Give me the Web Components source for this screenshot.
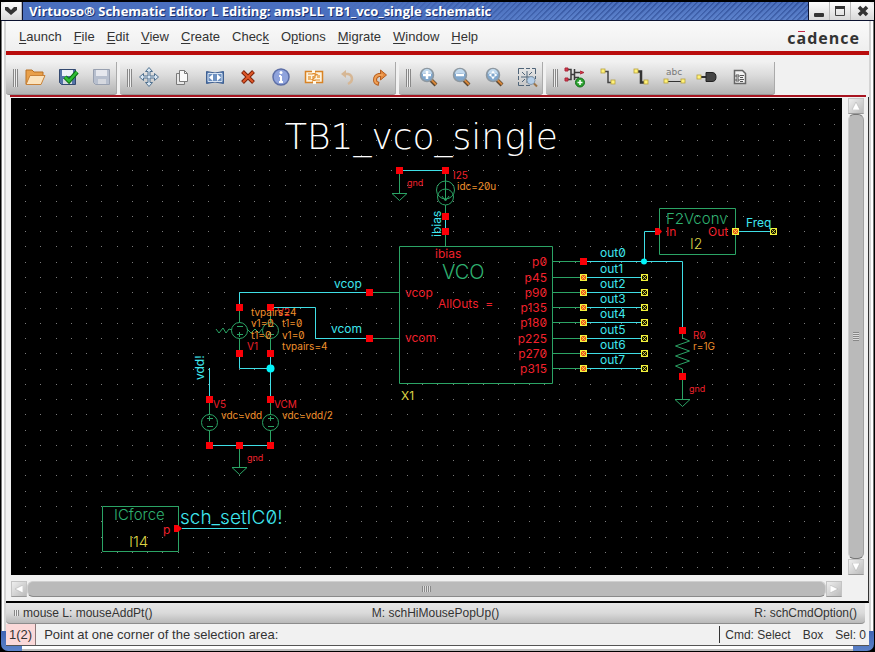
<!DOCTYPE html>
<html lang="en">
<head>
<meta charset="utf-8">
<title>Virtuoso Schematic Editor</title>
<style>
html, body { margin: 0; height: 100%; background: #000; }
body { font-family: "Liberation Sans", Arial, sans-serif; font-size: 13px; color: #333; }
</style>
</head>
<body>
<app-window></app-window>
<script>
function define(name, html, setup) {
  const tpl = document.createElement('template');
  tpl.innerHTML = html;
  customElements.define(name, class extends HTMLElement {
    constructor() {
      super();
      this.attachShadow({ mode: 'open' }).append(tpl.content.cloneNode(true));
    }
    connectedCallback() { if (setup) setup(this, this.shadowRoot); }
  });
}

const RESET = 'button{font:inherit;color:inherit;background:none;border:0;margin:0;padding:0;}';

/* ---------- title bar ---------- */
define('title-bar', `<style>${RESET}
:host { display:flex; height:20px; border-bottom:1px solid #0c1230; border-top:1px solid #000; box-sizing:border-box; background:#e8e8e8; }
h1 { flex:1; margin:0; padding-left:6px; font:bold 13px/18px "Open Sans","Noto Sans",sans-serif; color:#fff; white-space:nowrap; overflow:hidden;
  border-left:1px solid #0c1230; border-right:1px solid #0c1230; text-shadow:1px 1px 0 #1b2f6b;
  background:linear-gradient(90deg,#4a6fbe 0,#4a6fbe 40%,transparent 70%), linear-gradient(#3a5cab55,#6f94d855), repeating-linear-gradient(135deg,#2f4f9a 0 1px,#5379c6 2px 4px); }
button { width:21px; display:flex; align-items:center; justify-content:center; background:linear-gradient(#fdfdfd,#d8d8d8); border-right:1px solid #bbb; }
button:last-child { width:23px; border-right:0; border-top-right-radius:6px; }
button.menu { border-top-left-radius:6px; }
svg { display:block; }
</style>
<button class="menu" aria-label="Window menu"><svg width="12" height="10"><path d="M0 1h3l3 3 3-3h3v3L6 9 0 4z" fill="#333"/></svg></button>
<h1><slot></slot></h1>
<button aria-label="Minimize"><svg width="12" height="12"><rect x="1" y="8" width="10" height="4" rx="1" fill="#333"/></svg></button>
<button aria-label="Maximize"><svg width="12" height="12"><path d="M1.500 1.500h9v9h-9z" fill="none" stroke="#444" stroke-width="1"/><path d="M1 1h10v3H1z" fill="#333"/></svg></button>
<button aria-label="Close"><svg width="12" height="12"><path d="M2 2l8 8M10 2l-8 8" stroke="#333" stroke-width="3.500"/></svg></button>`);

/* ---------- menu bar ---------- */
define('menu-bar', `<style>${RESET}
:host { display:flex; align-items:center; justify-content:space-between; height:30px; padding:0 10px 0 7px; border-bottom:4px solid #b90c0c; background:linear-gradient(#fafafa,#efefef); }
nav { display:flex; padding-top:2px; }
button { padding:0 6px; line-height:20px; }
u { text-underline-offset:2px; text-decoration-thickness:1px; }
.brand { font:bold 16px/20px "Open Sans","Noto Sans",sans-serif; color:#333; display:flex; gap:1px; padding-top:4px; }
.brand i { font-style:normal; position:relative; }
.brand i::before { content:""; position:absolute; left:1px; right:1px; top:3px; height:1px; background:#c4274a; }
</style>
<nav></nav><div class="brand" aria-label="cadence"></div>`, (host, root) => {
  root.querySelector('nav').innerHTML = ['_Launch','_File','_Edit','_View','_Create','Chec_k','O_ptions','_Migrate','_Window','_Help']
    .map(t => '<button>' + t.replace(/_(.)/, '<u>$1</u>') + '</button>').join('');
  root.querySelector('.brand').innerHTML = [...'cadence'].map((c, i) => i === 1 ? `<i>${c}</i>` : `<span>${c}</span>`).join('');
});

/* ---------- tool bar ---------- */
define('tool-button', `<style>${RESET}
:host { display:block; width:33px; }
button { width:100%; height:29px; padding-bottom:2px; display:flex; align-items:center; justify-content:center; }
</style><button><slot></slot></button>`, (host, root) => {
  root.querySelector('button').setAttribute('aria-label', host.getAttribute('label'));
});

define('tool-group', `<style>
:host { display:flex; align-items:center; height:33px; padding-left:7px; box-sizing:border-box; border-bottom:1px solid #999; border-radius:0 0 3px 3px;
  background:linear-gradient(#f0f0f0,#dcdcdc 40%,#b4b4b4); box-shadow:inset -1px 0 0 #aaa; }
.grip { width:5px; height:18px; background:repeating-linear-gradient(90deg,#888 0 1px,#eee 1px 2px); }
</style><span class="grip"></span><slot></slot>`);

const svg = body => `<svg width="24" height="24" viewBox="0 0 24 24" fill="none">${body}</svg>`;
const magnifier = inner => svg(`<path d="M15 15l5 5" stroke="#5b4630" stroke-width="4"/><path d="M15.500 15l4.500 4.500" stroke="#d8873a" stroke-width="2"/><circle cx="11" cy="10" r="6.500" fill="#7fa6cc" stroke="#8e98a0" stroke-width="1.500"/><path d="M6 9a5 5 0 0 1 10 0q-5-2-10 0z" fill="#c3daee"/>${inner}`);
const pin = (x, y) => `<rect x="${x}" y="${y}" width="4" height="4" fill="#fff27a" stroke="#b8a23c" stroke-width=".8"/>`;
const TOOLS = [
  [
    ['Open', svg('<path d="M3 19V5h6l2 2h9v4" fill="#e9a04a" stroke="#b87025"/><path d="M3 19.500l4-9h15l-4 9z" fill="#fbe3bd" stroke="#c98238"/>')],
    ['Check and save', svg('<path d="M3.500 4.500h16v15h-14l-2-2z" fill="#5574a8" stroke="#33496f"/><path d="M6 5h11v6H6z" fill="#eef2f8"/><path d="M7 14h9v5H7z" fill="#d5dae2"/><path d="M9 12l4 4 8-9" stroke="#0c6d12" stroke-width="4.500"/><path d="M9 12l4 4 8-9" stroke="#2fbf35" stroke-width="2.500"/>')],
    ['Save', svg('<path d="M4.500 4.500h16v15h-14l-2-2z" fill="#b7bfce" stroke="#98a0b0"/><path d="M7 5h11v6H7z" fill="#e6e8ee"/><path d="M9 14h8v5H9z" fill="#d5d8df"/>')]
  ],
  [
    ['Move', svg('<path d="M12 2.500l3.500 4H13v4.500h4.500V8.500l4 3.500-4 3.500V13H13v4.500h2.500l-3.500 4-3.500-4H11V13H6.500v2.500l-4-3.500 4-3.500V11H11V6.500H8.500z" fill="#dbe8f4" stroke="#50718f"/>')],
    ['Copy', svg('<path d="M6.500 8.500h8v11h-8z" fill="#e8e8e8" stroke="#7a7a7a"/><path d="M9.500 5.500h5l3 3v8h-8z" fill="#fafafa" stroke="#7a7a7a"/><path d="M14.500 5.500v3h3" stroke="#7a7a7a"/>')],
    ['Stretch', svg('<path d="M3.500 6.500q8.500 3 17 0v12q-8.500-3-17 0z" fill="#4f76ad" stroke="#3e5f91"/><path d="M5 8.500h14v8H5z" stroke="#d7e3f2" fill="#6d90c0"/><path d="M6 12.500l4-3.500v7zM18 12.500l-4-3.500v7z" fill="#fff"/>')],
    ['Delete', svg('<path d="M6.500 6.500l11 11M17.500 6.500l-11 11" stroke="#7d2109" stroke-width="4"/><path d="M7 7l10 10M17 7l-10 10" stroke="#e0592a" stroke-width="2"/>')],
    ['Properties', svg('<circle cx="12" cy="12" r="8" fill="#8fa3dc" stroke="#5c6ea6" stroke-width="1.500"/><path d="M12 11v6M10 17h4M10 11h2" stroke="#fff" stroke-width="2"/><circle cx="12" cy="7.500" r="1.500" fill="#fff"/>')],
    ['Rotate', svg('<path d="M3.500 6.500h17v11h-17z" fill="#fdf3df" stroke="#d98324" stroke-width="1.500"/><path d="M6 9h5v-1l4 1.500-4 2v6M18 15h-5v1l-3-1.500 3-2V7" stroke="#e08d30" stroke-width="1.200"/><path d="M10 5h3v3h-3zM11 16h3v3h-3z" fill="#fff8ea"/><path d="M6 11h3v4H6zM15 10h3v3h-3z" fill="#edb36a"/>')],
    ['Undo', svg('<path d="M9 9h4q4 1 4 5 0 3-4 5" stroke="#d6b795" stroke-width="2.500"/><path d="M6 9l5-4v8z" fill="#d6b795"/>')],
    ['Redo', svg('<path d="M15 10h-4q-4 1-4 5 0 3 4 4" stroke="#b55e20" stroke-width="4"/><path d="M18.500 10l-6-5v10z" fill="#e58a3f" stroke="#b55e20"/><path d="M15 10h-4q-4 1-4 5 0 3 3 3.500" stroke="#f0a055" stroke-width="2"/>')]
  ],
  [
    ['Zoom in', magnifier('<path d="M11 6v8M7 10h8" stroke="#fff" stroke-width="2.500"/>')],
    ['Zoom out', magnifier('<path d="M7 10h8" stroke="#fff" stroke-width="2.500"/>')],
    ['Zoom fit', magnifier('<path d="M6.500 10l3-2v4zM15.500 10l-3-2v4zM11 5.500l-2 3h4zM11 14.500l-2-3h4z" fill="#fff"/>')],
    ['Zoom selected', svg('<path d="M3.500 9V3.500H9M11 3.500h4M17 3.500h3.500V9M20.500 11v3M3.500 11v4M3.500 17v3.500H9M11 20.500h4" stroke="#4f6478"/><path d="M12 6v12M6 12h12M7 7l3 3M17 7l-3 3M7 17l3-3" stroke="#4f6478"/><circle cx="16" cy="15.500" r="4" fill="#b4cee8" stroke="#8396a8"/><path d="M19 18.500l3 3" stroke="#9c7448" stroke-width="2"/>')]
  ],
  [
    ['Create instance', svg('<path d="M2 4.500h6v10H2M11.500 4v11M8 9.500h3M12 7.500h5M12 12.500h4" stroke="#3a3a3a" stroke-width="1.500"/><path d="M2 3h3v3H2zM2 13h3v3H2zM17 6l4 1.500-4 1.500" fill="#d8384a" stroke="#a8283a"/><circle cx="17" cy="17.500" r="4.500" fill="#2aa02e" stroke="#14701a"/><path d="M17 15v5M14.500 17.500h5" stroke="#fff" stroke-width="1.500"/>')],
    ['Create wire', svg(`<path d="M7 6.500h5v11h5" stroke="#444" stroke-width="1.500"/>${pin(5, 4)}${pin(15, 15)}`)],
    ['Create wide wire', svg(`<path d="M7 6.500h5v11h5" stroke="#333" stroke-width="2.500"/>${pin(5, 4)}${pin(15, 15)}`)],
    ['Wire name', svg(`<text x="4" y="10" font-family="DejaVu Sans" font-size="9" fill="#777">abc</text><path d="M4 16.500h16" stroke="#333"/>${pin(2, 14)}${pin(19, 14)}`)],
    ['Create pin', svg(`<path d="M4 12h8" stroke="#333" stroke-width="2"/><path d="M11 7.500h6q4 0 4 4.500t-4 4.500h-6z" fill="#444" stroke="#222"/>${pin(2, 10)}`)],
    ['Note', svg('<path d="M6.500 5.500h8l3 3v10h-11z" fill="#f2f2f2" stroke="#666" stroke-width="1.500"/><path d="M8 10h3v2H8zM12 10.500h4M12 12.500h3M8 14h3v2H8zM12 14.500h4M12 16.500h3" stroke="#555"/>')]
  ]
];
define('tool-bar', `<style>
:host { display:flex; gap:3px; padding-top:7px; }
tool-group:last-child { padding-right:19px; }
</style>`, (host, root) => {
  for (const group of TOOLS) {
    const g = document.createElement('tool-group');
    g.innerHTML = group.map(([label, icon]) => `<tool-button label="${label}">${icon}</tool-button>`).join('');
    root.append(g);
  }
});

/* ---------- scroll bars ---------- */
define('scroll-strip', `<style>${RESET}
:host { display:flex; height:16px; }
:host([vertical]) { flex-direction:column; height:auto; width:16px; }
button { width:16px; height:16px; flex:none; display:flex; align-items:center; justify-content:center; background:linear-gradient(135deg,#eee,#bbb); border:1px solid #c4c4c4; border-bottom-color:#999; box-sizing:border-box; }
.thumb { flex:1; display:flex; align-items:center; justify-content:center; box-sizing:border-box; background:#bababa; border:1px solid #cfcfcf; border-bottom-color:#8a8a8a; border-radius:6px; }
:host([vertical]) .thumb { border-color:#777 #a0a0a0 #777 #cfcfcf; }
.grip { width:9px; height:6px; background:repeating-linear-gradient(90deg,#888 0 1px,#ddd 1px 2px); }
:host([vertical]) .grip { width:6px; height:9px; background:repeating-linear-gradient(#888 0 1px,#ddd 1px 2px); }
:host([vertical]) svg { transform:rotate(90deg); }
</style>
<button aria-label="Back"><svg width="8" height="8"><path d="M0 4l8-4v8z" fill="#fff" stroke="#aaa" stroke-width=".5"/></svg></button>
<div class="thumb"><span class="grip"></span></div>
<button aria-label="Forward"><svg width="8" height="8"><path d="M8 4L0 0v8z" fill="#fff" stroke="#aaa" stroke-width=".5"/></svg></button>`);

/* ---------- schematic ---------- */
define('schematic-canvas', `<style>
:host { display:block; background:#000; overflow:hidden; min-width:0; min-height:0; }
svg { display:block; width:100%; height:100%; }
text { font-family:Inter,"DejaVu Sans",sans-serif; font-feature-settings:"zero" 1; font-weight:400; white-space:pre; }
text.light { font-weight:300; }
text.title { font-family:"DejaVu Sans",sans-serif; font-weight:200; }
.w { stroke:#3fdfe6; } .g { stroke:#2ba465; } .w,.g { fill:none; stroke-width:1; }
</style><svg role="img" aria-label="TB1_vco_single schematic"><g transform="translate(-11,-98)"></g></svg>`, (host, root) => {
  const step = 15.27;
  let dots = '';
  for (let j = 0; j < 31; j++) for (let i = 0; i < 54; i++)
    dots += `M${Math.round(25 + i * step)} ${Math.round(109 + j * step)}h1v1h-1z`;
  let s = `<path d="${dots}" fill="#7c7c7c"/>`;
  const wire = d => s += `<path class="w" d="${d}"/>`;
  const green = d => s += `<path class="g" d="${d}"/>`;
  const sq = (x, y) => s += `<rect x="${x - 3}" y="${y - 3}" width="7" height="7" fill="#fb0007"/>`;
  const noconn = (x, y, fill) => s += `<rect x="${x - 3}.500" y="${y - 2}.500" width="6" height="6" fill="${fill}" stroke="#f2f23c"/><path d="M${x - 2} ${y - 1}l5 5m0-5l-5 5" stroke="#f2f23c" stroke-width=".8"/>`;
  const circle = (x, y, r) => s += `<circle class="g" cx="${x}" cy="${y}" r="${r}"/>`;
  const text = (t, x, y, size, fill, extra = '') => s += `<text x="${x}" y="${y}" font-size="${size}" fill="${fill}" ${extra}>${t}</text>`;
  const RED = '#f0202c', ORANGE = '#f0902c', CYAN = '#3fe6ee', GREEN = '#2fb070', YELLOW = '#dcd444';

  /* boxes */
  green('M399.500 246.500h153v137h-153zM659.500 208.500h76v46h-76zM102.500 506.500h76v45h-76z');

  /* bias branch */
  wire('M399 170.500h46M445.500 216v15');
  green('M399.500 170v23M392 193.500h15l-7.500 7zM445.500 170v30M445.500 205v11M445.500 231v15M442 196l3.500 5 3.500-5');
  circle(445.5, 190, 9); circle(445.5, 197, 8);
  [[399, 170], [445, 170], [445, 216], [445, 231]].forEach(p => sq(...p));

  /* control inputs */
  wire('M239.500 307v-14.500H369M270 307.500h45.500v31H369M239.500 353v15.500h31M270.500 353v46M209.500 368v31M209 445.500h61');
  green('M369 292.500h30M369 338.500h30M239.500 307v46M270.500 307v46M209.500 399v46M270.500 399v46M239.500 445v22M232 467.500h15l-7.500 7z');
  [[239, 330], [270, 330], [209, 422], [270, 422]].forEach(([x, y], i) => {
    s += `<circle cx="${x}.500" cy="${y}.500" r="8" class="g" style="fill:#000"/>`;
    const a = y - 4, b = y + 4;
    green(`M${x - 2} ${a}.500h6M${x - 2} ${b}.500h6M${x}.500 ${(i < 2 ? b : a) - 2}v5`);
  });
  green('M216 329l3 4 4-5 3 5 3-4 3 1M247 329l4 4 4-4 4 4 3-4');
  [[369, 292], [369, 338], [239, 307], [270, 307], [239, 353], [270, 353], [209, 399], [270, 399], [209, 445], [239, 445], [270, 445]].forEach(p => sq(...p));
  s += '<circle cx="270.500" cy="368.500" r="4" fill="#00f4fa"/>';

  /* outputs */
  [261, 277, 292, 307, 322, 338, 353, 368].forEach((y, i) => {
    green(`M552 ${y}.500h31`);
    wire(`M583 ${y}.500h61`);
    if (i) { noconn(583, y - 1, '#e8531c'); noconn(644, y - 1, '#161600'); } else sq(583, y);
    text('out' + i, 600, y - 4, 12, CYAN);
    text('p' + i * 45, 547, y + 5, 12, RED, 'text-anchor="end"');
  });
  wire('M644.500 261v-29.500H658M644 261.500h38.500V330M736 231.500h37');
  s += '<circle cx="644" cy="261.500" r="3" fill="#00f4fa"/><path d="M655 228h4l3 3.500-3 3.500h-4z" fill="#fb0007"/>';
  noconn(735, 230, '#e8531c'); noconn(773, 230, '#161600');
  green('M682.500 334v4l7 3-14 5 14 5-14 5 14 5-14 5 7 3v4M682.500 376v23M675 399.500h15l-7.500 7z');
  sq(682, 330); sq(682, 376);

  /* initial condition */
  wire('M182 528.500h66');
  s += '<path d="M174 525h4l4 3.500-4 3.500h-4z" fill="#fb0007"/>';

  /* labels */
  text('TB1_vco_single', 285, 149, 36, '#fff', 'class="title"');
  text('I25', 453, 179, 10, RED); text('gnd', 407, 186, 9, RED); text('idc=20u', 457, 190, 10, ORANGE);
  text('ibias', 0, 0, 12, CYAN, 'transform="translate(441 237) rotate(-90)"');
  text('ibias', 435, 258, 12, RED); text('VCO', 442, 279, 20, GREEN, 'class="light"');
  text('vcop', 405, 297, 12, RED); text('vcom', 405, 342, 12, RED); text('AllOuts  =', 438, 308, 12, RED);
  text('X1', 401, 400, 12, YELLOW);
  text('vcop', 334, 288, 12, CYAN); text('vcom', 331, 333, 12, CYAN);
  text('vdd!', 0, 0, 12, CYAN, 'transform="translate(204 380) rotate(-90)"');
  text('V2', 277, 316, 10, RED);
  text('tvpairs=4', 251, 316, 10, ORANGE); text('v1=0', 251, 327, 10, ORANGE); text('t1=0', 251, 339, 10, ORANGE);
  text('t1=0', 282, 327, 10, ORANGE); text('v1=0', 282, 339, 10, ORANGE); text('tvpairs=4', 282, 350, 10, ORANGE);
  text('V1', 247, 350, 10, RED); text('V5', 213, 408, 10, RED); text('VCM', 274, 408, 10, RED);
  text('vdc=vdd', 221, 419, 10, ORANGE); text('vdc=vdd/2', 282, 419, 10, ORANGE); text('gnd', 247, 461, 9, RED);
  text('F2Vconv', 666, 224, 15, GREEN, 'class="light"'); text('In', 666, 236, 12, RED); text('Out', 708, 236, 12, RED);
  text('I2', 690, 249, 14, YELLOW, 'class="light"'); text('Freq', 746, 227, 12, CYAN);
  text('R0', 693, 339, 10, RED); text('r=1G', 693, 350, 10, ORANGE); text('gnd', 689, 392, 9, RED);
  text('ICforce', 114, 520, 15, GREEN, 'class="light"'); text('p', 163, 534, 12, RED); text('I14', 129, 547, 15, YELLOW, 'class="light"');
  text('sch_setIC0!', 180, 524, 19, CYAN, 'class="light"');
  root.querySelector('g').innerHTML = s;
});

/* ---------- bottom bars ---------- */
define('mouse-bar', `<style>
:host { display:grid; grid-template-columns:1fr auto 1fr; align-items:center; height:21px; padding:0 8px; margin-right:4px; font-size:12px; background:linear-gradient(#e6e6e6,#dadada 50%,#b9b9b9); border-bottom:1px solid #8c8c8c; box-sizing:border-box; border-radius:0 0 4px 4px; }
.l { display:flex; align-items:center; gap:4px; }
.l::before { content:""; width:5px; height:6px; background:repeating-linear-gradient(90deg,#888 0 1px,#eee 1px 2px); }
.r { text-align:right; }
</style>
<span class="l">mouse L: mouseAddPt()</span><span>M: schHiMousePopUp()</span><span class="r">R: schCmdOption()</span>`);

define('status-bar', `<style>
:host { display:flex; height:21px; line-height:21px; border-bottom:1px solid #555; }
.n { padding:0 3px; background:#fbd9d9; border-right:1px solid #8d7777; margin-right:8px; }
.p { flex:1; }
.s { display:flex; gap:12px; padding:0 3px 0 5px; border-left:1px solid #333; margin:2px 0; line-height:19px; font-size:12px; }
</style>
<span class="n">1(2)</span><span class="p">Point at one corner of the selection area:</span>
<span class="s"><span>Cmd: Select</span><span>Box</span><span>Sel: 0</span></span>`);

/* ---------- window ---------- */
define('app-window', `<style>
:host { display:flex; flex-direction:column; height:100vh; box-sizing:border-box; padding:1px; border:0; background:#000; overflow:hidden; }
.frame { flex:1; min-height:0; display:flex; flex-direction:column; padding:0 5px 5px; border-radius:0 0 7px 7px;
  background:linear-gradient(#3f65b4,#5c82c8) left bottom/21px 20px no-repeat, linear-gradient(#3f65b4,#5c82c8) right bottom/21px 20px no-repeat,
    linear-gradient(#fff 0 3px,#bbb 3px) left bottom/100% 5px no-repeat,
    linear-gradient(90deg,#777 0 1px,#fff 1px 3px,#d4d4d4 3px calc(100% - 3px),#fff calc(100% - 3px) calc(100% - 1px),#777 calc(100% - 1px)); }
.body { flex:1; min-height:0; display:flex; flex-direction:column; background:#f1f1f1; }
.work { flex:1; min-height:0; display:grid; grid-template-columns:1fr 16px; grid-template-rows:1fr 16px; column-gap:6px; row-gap:6px; padding:1px 4px 4px 5px; border-bottom:2px solid #000; border-right:1px solid #333; }
.rule { height:2px; margin:0 3px 0 4px; background:#a81420; }
</style>
<title-bar>Virtuoso® Schematic Editor L Editing: amsPLL TB1_vco_single schematic</title-bar>
<div class="frame"><div class="body">
  <menu-bar></menu-bar><tool-bar></tool-bar><div class="rule"></div>
  <div class="work"><schematic-canvas></schematic-canvas><scroll-strip vertical></scroll-strip><scroll-strip></scroll-strip></div>
  <mouse-bar></mouse-bar><status-bar></status-bar>
</div></div>`);
</script>
</body>
</html>
